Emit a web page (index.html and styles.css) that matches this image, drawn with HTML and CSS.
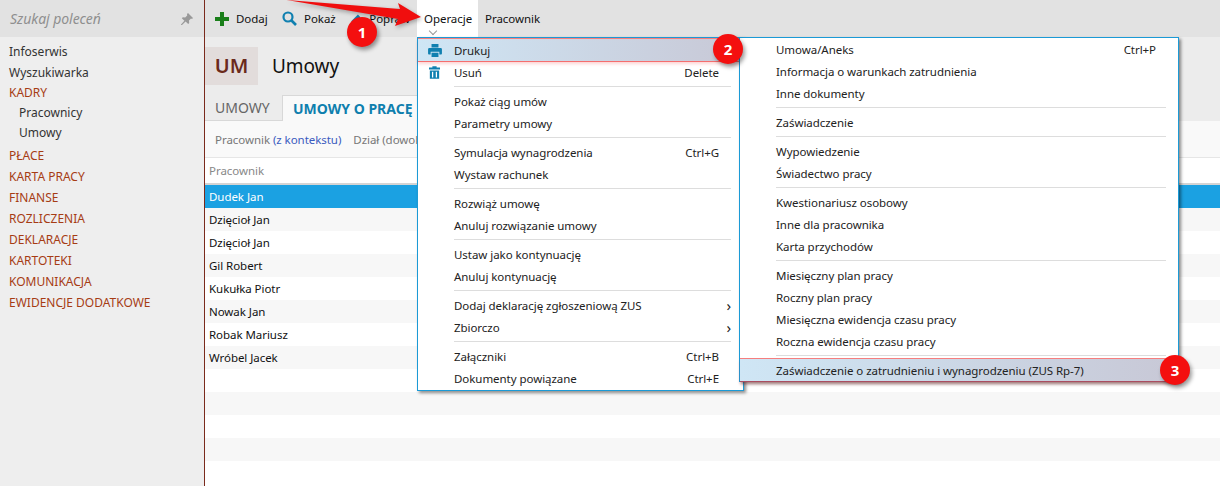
FILE: index.html
```html
<!DOCTYPE html>
<html lang="pl">
<head>
    <meta charset="UTF-8">
    <title>Umowy</title>
    <link rel="stylesheet" href="styles.css">
</head>
<body>
    <div class="app">
        <aside class="sidebar">
            <div class="search">
                <span class="search-text">Szukaj poleceń</span>
                <svg class="pin" width="12" height="12" viewBox="0 0 12 12"><path d="M7 0l5 5-1 1-1-.4-2 2 .2 2.4-1 1-2.6-2.6L1 12l-1 0 0-.6 3.400-3.600L.8 5.200l1-1L4.200 4.400l2-2L6 1z" fill="#999"/></svg>
            </div>
            <nav class="nav">
                <a class="nav-item">Infoserwis</a>
                <a class="nav-item short">Wyszukiwarka</a>
                <a class="nav-item section">KADRY</a>
                <a class="nav-item sub">Pracownicy</a>
                <a class="nav-item sub last-sub">Umowy</a>
                <a class="nav-item section">PŁACE</a>
                <a class="nav-item section">KARTA PRACY</a>
                <a class="nav-item section">FINANSE</a>
                <a class="nav-item section">ROZLICZENIA</a>
                <a class="nav-item section">DEKLARACJE</a>
                <a class="nav-item section">KARTOTEKI</a>
                <a class="nav-item section">KOMUNIKACJA</a>
                <a class="nav-item section">EWIDENCJE DODATKOWE</a>
            </nav>
        </aside>

        <main class="main">
            <div class="toolbar">
                <button class="tool tool-add">
                    <svg width="14" height="14" viewBox="0 0 14 14"><path d="M5 0h4v5h5v4H9v5H5V9H0V5h5z" fill="#1a7f1a"/></svg>
                    Dodaj
                </button>
                <button class="tool tool-show">
                    <svg width="15" height="15" viewBox="0 0 15 15"><circle cx="6" cy="6" r="4.500" fill="none" stroke="#1080b0" stroke-width="2.200"/><path d="M9.500 9.500L14 14" stroke="#1080b0" stroke-width="2.600"/></svg>
                    Pokaż
                </button>
                <button class="tool tool-edit">
                    <svg width="14" height="14" viewBox="0 0 14 14"><path d="M1 13l1-4 7-7 3 3-7 7z" fill="#1080b0"/></svg>
                    Popraw
                </button>
                <button class="tool tool-active">Operacje</button>
                <button class="tool">Pracownik</button>
            </div>

            <div class="title-row">
                <div class="badge-um">UM</div>
                <h1 class="title">Umowy</h1>
            </div>

            <div class="tabs">
                <div class="tab">UMOWY</div>
                <div class="tab tab-active">UMOWY O PRACĘ</div>
            </div>

            <div class="filters">
                <span>Pracownik <span class="link">(z kontekstu)</span></span>
                <span>Dział (dowolny)</span>
            </div>

            <div class="table-head">Pracownik</div>
            <div class="rows">
                <div class="row selected">Dudek Jan</div>
                <div class="row">Dzięcioł Jan</div>
                <div class="row">Dzięcioł Jan</div>
                <div class="row">Gil Robert</div>
                <div class="row">Kukułka Piotr</div>
                <div class="row">Nowak Jan</div>
                <div class="row">Robak Mariusz</div>
                <div class="row">Wróbel Jacek</div>
                <div class="row"></div>
                <div class="row"></div>
                <div class="row"></div>
                <div class="row"></div>
            </div>
        </main>
    </div>

    <!-- menu Operacje -->
    <div class="menu menu-main">
        <div class="menu-item mark-blue">
            <svg class="menu-icon icon-print" width="14" height="13" viewBox="0 0 16 15"><path d="M4 0h8v4H4zM1.500 4.500h13q1.500 0 1.500 1.500v5q0 1-1 1h-2V9H3v3H1q-1 0-1-1V6q0-1.500 1.500-1.500zM4 10h8v5H4z" fill="#1080b0"/></svg>
            <span>Drukuj</span>
        </div>
        <div class="menu-item">
            <svg class="menu-icon icon-trash" width="11" height="13" viewBox="0 0 13 15"><path d="M0 1.500h4V0h5v1.500h4V4H0zM1 5h11v10H1zM3.500 6.500v7h1.500v-7zM8 6.500v7h1.500v-7z" fill="#1080b0" fill-rule="evenodd"/></svg>
            <span>Usuń</span><span class="key">Delete</span>
        </div>
        <div class="sep"></div>
        <div class="menu-item"><span>Pokaż ciąg umów</span></div>
        <div class="menu-item"><span>Parametry umowy</span></div>
        <div class="sep"></div>
        <div class="menu-item"><span>Symulacja wynagrodzenia</span><span class="key">Ctrl+G</span></div>
        <div class="menu-item"><span>Wystaw rachunek</span></div>
        <div class="sep"></div>
        <div class="menu-item"><span>Rozwiąż umowę</span></div>
        <div class="menu-item"><span>Anuluj rozwiązanie umowy</span></div>
        <div class="sep"></div>
        <div class="menu-item"><span>Ustaw jako kontynuację</span></div>
        <div class="menu-item"><span>Anuluj kontynuację</span></div>
        <div class="sep"></div>
        <div class="menu-item"><span>Dodaj deklarację zgłoszeniową ZUS</span><span class="more">›</span></div>
        <div class="menu-item"><span>Zbiorczo</span><span class="more">›</span></div>
        <div class="sep"></div>
        <div class="menu-item"><span>Załączniki</span><span class="key">Ctrl+B</span></div>
        <div class="menu-item"><span>Dokumenty powiązane</span><span class="key">Ctrl+E</span></div>
    </div>

    <!-- podmenu Drukuj -->
    <div class="menu menu-sub">
        <div class="menu-item"><span>Umowa/Aneks</span><span class="key">Ctrl+P</span></div>
        <div class="menu-item"><span>Informacja o warunkach zatrudnienia</span></div>
        <div class="menu-item"><span>Inne dokumenty</span></div>
        <div class="sep"></div>
        <div class="menu-item"><span>Zaświadczenie</span></div>
        <div class="sep"></div>
        <div class="menu-item"><span>Wypowiedzenie</span></div>
        <div class="menu-item"><span>Świadectwo pracy</span></div>
        <div class="sep"></div>
        <div class="menu-item"><span>Kwestionariusz osobowy</span></div>
        <div class="menu-item"><span>Inne dla pracownika</span></div>
        <div class="menu-item"><span>Karta przychodów</span></div>
        <div class="sep"></div>
        <div class="menu-item"><span>Miesięczny plan pracy</span></div>
        <div class="menu-item"><span>Roczny plan pracy</span></div>
        <div class="menu-item"><span>Miesięczna ewidencja czasu pracy</span></div>
        <div class="menu-item"><span>Roczna ewidencja czasu pracy</span></div>
        <div class="sep"></div>
        <div class="menu-item mark-blue"><span>Zaświadczenie o zatrudnieniu i wynagrodzeniu (ZUS Rp-7)</span></div>
    </div>

    <!-- adnotacje na zrzucie -->
    <div class="chevron"></div>
    <svg class="arrow" width="150" height="32" viewBox="0 0 150 32"><path d="M12 0L125 9 123 3 146 17 120 26 123 19 0 -2z" fill="#f00e0e"/></svg>
    <div class="step step-1">1</div>
    <div class="step step-2">2</div>
    <div class="step step-3">3</div>
</body>
</html>
```

FILE: styles.css
```css
* {
    box-sizing: border-box;
}

html, body {
    margin: 0;
    height: 100%;
    overflow: hidden;
}

body {
    position: relative;
    font-family: "Noto Sans", "Open Sans", sans-serif;
    font-size: 11.5px;
    letter-spacing: -0.05px;
    color: #111;
    background-color: #f0f0f0;
}

.app {
    display: flex;
    height: 486px;
}

.sidebar {
    width: 205px;
    flex: none;
    background-color: #eeeeee;
    border-right: 1px solid #7a2a1c;
}

.search {
    height: 37px;
    display: flex;
    align-items: center;
    justify-content: space-between;
    padding: 0 11px 0 10px;
    background-color: #e2e2e2;
}

.search-text {
    font-style: italic;
    font-size: 14px;
    color: #8f8f8f;
}

.nav {
    display: flex;
    flex-direction: column;
    padding-top: 4px;
    font-size: 12px;
    letter-spacing: 0;
}

.nav-item {
    height: 21px;
    line-height: 21px;
    padding-left: 9px;
    color: #333;
}

.nav-item.short {
    height: 20px;
}

.nav-item.section {
    color: #a63c14;
}

.nav-item.sub {
    padding-left: 19px;
    height: 20px;
    line-height: 20px;
}

.nav-item.last-sub {
    margin-bottom: 2px;
}

.main {
    flex: 1;
    min-width: 0;
    display: flex;
    flex-direction: column;
    background-color: #ececec;
}

.toolbar {
    height: 37px;
    display: flex;
    background-color: #e2e2e2;
    padding-left: 10px;
}

.tool {
    display: flex;
    align-items: center;
    gap: 7px;
    height: 37px;
    padding: 0 7px 0 0;
    border: 0;
    background: none;
    font: inherit;
    letter-spacing: inherit;
    color: #111;
}

.tool-add {
    width: 67px;
}

.tool-show {
    width: 68px;
}

.tool-edit {
    width: 67px;
    padding-left: 0;
}

.tool-active {
    width: 61px;
    padding: 0 7px;
    background-color: #fff;
}

.tool-active + .tool {
    padding-left: 7px;
}

.title-row {
    height: 58px;
    display: flex;
    align-items: flex-start;
    padding-top: 10px;
}

.badge-um {
    width: 53px;
    height: 38px;
    line-height: 38px;
    text-align: center;
    font-size: 20px;
    font-weight: 600;
    color: #6b2a1c;
    background-color: #e2dcdb;
}

.title {
    margin: 0 0 0 14px;
    font-size: 19px;
    font-weight: 400;
    line-height: 38px;
}

.tabs {
    height: 26px;
    display: flex;
}

.tab {
    width: 77px;
    line-height: 26px;
    padding-left: 10px;
    font-size: 14px;
    letter-spacing: 0;
    color: #666;
    border-bottom: 1px solid #d8d8d8;
}

.tab-active {
    width: 140px;
    font-weight: 700;
    color: #0f7fae;
    background-color: #f9f9f9;
    border: 1px solid #d8d8d8;
    border-bottom: 0;
    white-space: nowrap;
}

.filters {
    height: 37px;
    display: flex;
    align-items: center;
    gap: 12px;
    padding-left: 10px;
    color: #777;
    background-color: #f9f9f9;
    border-bottom: 1px solid #e6e6e6;
}

.link {
    color: #3a5bc0;
}

.table-head {
    height: 27px;
    line-height: 26px;
    padding-left: 4px;
    color: #888;
    background-color: #fff;
    border-bottom: 2px solid #d4d4d4;
}

.rows {
    flex: 1;
    background-color: #fff;
}

.row {
    height: 23px;
    line-height: 23px;
    padding-left: 4px;
}

.row:nth-child(even) {
    background-color: #f7f7f7;
}

.row.selected {
    color: #fff;
    background-color: #1ba1e2;
}

.menu {
    position: absolute;
    top: 37px;
    display: flex;
    flex-direction: column;
    background-color: #fff;
    border: 1px solid #1b9ad6;
    box-shadow: 2px 2px 3px rgba(0, 0, 0, 0.45);
}

.menu-main {
    left: 417px;
    width: 327px;
    height: 354px;
    padding-top: 1px;
}

.menu-sub {
    left: 739px;
    width: 440px;
    height: 345px;
}

.menu-item {
    position: relative;
    flex: none;
    height: 22px;
    display: flex;
    align-items: center;
    justify-content: space-between;
    padding: 0 24px 0 36px;
    color: #222;
}

.menu-sub .menu-item {
    padding-right: 22px;
}

.menu-icon {
    position: absolute;
    top: 5px;
}

.icon-print {
    left: 10px;
    top: 5px;
}

.icon-trash {
    left: 11px;
}

.mark-blue {
    background: linear-gradient(90deg, #cfe6f5, #c8c8d6);
    box-shadow: 0 -1px 0 rgba(240, 40, 40, 0.6), 0 1px 0 rgba(240, 40, 40, 0.6), 0 3px 3px rgba(240, 40, 40, 0.2);
}

.sep {
    flex: none;
    height: 7px;
    margin: 0 12px 0 36px;
    background: linear-gradient(#ddd, #ddd) center / 100% 1px no-repeat;
}

.more {
    font-size: 15px;
    margin-right: -12px;
}

.chevron {
    position: absolute;
    left: 430px;
    top: 28px;
    width: 6px;
    height: 6px;
    border-right: 1px solid #999;
    border-bottom: 1px solid #999;
    transform: rotate(45deg);
}

.arrow {
    position: absolute;
    left: 275px;
    top: 0;
    filter: drop-shadow(1px 2px 2px rgba(0, 0, 0, 0.3));
}

.step {
    position: absolute;
    width: 30px;
    height: 30px;
    line-height: 30px;
    text-align: center;
    border-radius: 50%;
    font-size: 15px;
    font-weight: 700;
    color: #fff;
    background-color: #f40f0f;
    box-shadow: 2px 3px 4px rgba(0, 0, 0, 0.4);
}

.step-1 {
    left: 347px;
    top: 17px;
}

.step-2 {
    left: 713px;
    top: 34px;
}

.step-3 {
    left: 1160px;
    top: 355px;
}
```
